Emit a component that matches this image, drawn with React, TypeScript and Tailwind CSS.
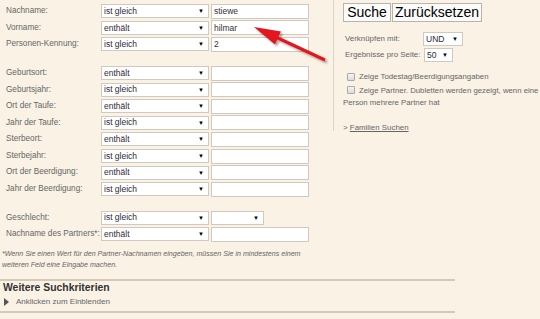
import React from "react";

const font = { fontFamily: '"Liberation Sans", Arial, sans-serif' };

function Select({ value, w }: { value: string; w: string }) {
  return (
    <div
      className={`${w} shrink-0 h-[14px] bg-white border border-[#cfc9bf] flex items-center justify-between pl-[2px] pr-[4px] text-[8.5px] text-[#2e2a3a] whitespace-nowrap`}
    >
      <span>{value}</span>
      <span className="text-[6px] text-black leading-none">▼</span>
    </div>
  );
}

function TextInput({ value }: { value?: string }) {
  return (
    <div className="w-[98px] shrink-0 h-[15px] bg-white border border-[#cfc9bf] flex items-center pl-[2px] text-[8.5px] text-[#333]">
      {value}
    </div>
  );
}

function Row({ label, op, value }: { label: string; op: string; value?: string }) {
  return (
    <div className="h-[16.6px] flex items-center">
      <div className="w-[95px] shrink-0 text-[8.2px] text-[#666] whitespace-nowrap">{label}</div>
      <Select value={op} w="w-[108px]" />
      <div className="w-[2px] shrink-0" />
      <TextInput value={value} />
    </div>
  );
}

function Check() {
  return (
    <span className="inline-block shrink-0 w-[8px] h-[8px] border border-[#aaa] rounded-[1px] bg-gradient-to-b from-[#f4f4f4] to-[#dcdcdc] mr-[4px]" />
  );
}

export default function App() {
  return (
    <div
      className="relative w-[540px] h-[319px] overflow-hidden bg-[#f9f2e5]"
      style={font}
    >
      <div className="flex">
        <div className="w-[333px] shrink-0 pl-[6px] pt-[3px]">
          <Row label="Nachname:" op="ist gleich" value="stiewe" />
          <Row label="Vorname:" op="enthält" value="hilmar" />
          <Row label="Personen-Kennung:" op="ist gleich" value="2" />
          <div className="h-[12px]" />
          <Row label="Geburtsort:" op="enthält" />
          <Row label="Geburtsjahr:" op="ist gleich" />
          <Row label="Ort der Taufe:" op="enthält" />
          <Row label="Jahr der Taufe:" op="ist gleich" />
          <Row label="Sterbeort:" op="enthält" />
          <Row label="Sterbejahr:" op="ist gleich" />
          <Row label="Ort der Beerdigung:" op="enthält" />
          <Row label="Jahr der Beerdigung:" op="ist gleich" />
          <div className="h-[12px]" />
          <div className="h-[16.6px] flex items-center">
            <div className="w-[95px] shrink-0 text-[8.2px] text-[#666] whitespace-nowrap">Geschlecht:</div>
            <Select value="ist gleich" w="w-[108px]" />
            <div className="w-[2px] shrink-0" />
            <Select value="" w="w-[53px]" />
          </div>
          <Row label="Nachname des Partners*:" op="enthält" />
        </div>
        <div className="w-[207px] shrink-0 h-[131px] border-l border-[#ddd4c4] pl-[9px] whitespace-nowrap">
          <div className="flex gap-[1px] mt-[3px]">
            <div className="w-[48px] h-[19px] bg-[#fbfbfb] border border-[#b9b4ab] flex items-center justify-center text-[14px] text-black">
              Suche
            </div>
            <div className="w-[90px] h-[19px] bg-[#fbfbfb] border border-[#b9b4ab] flex items-center justify-center text-[14px] text-black">
              Zurücksetzen
            </div>
          </div>
          <div className="mt-[9px] h-[16px] flex items-center pl-[2px]">
            <div className="w-[78px] shrink-0 text-[7.9px] text-[#666]">Verknüpfen mit:</div>
            <Select value="UND" w="w-[40px]" />
          </div>
          <div className="h-[16px] flex items-center pl-[2px]">
            <div className="w-[79px] shrink-0 text-[7.9px] text-[#666]">Ergebnisse pro Seite:</div>
            <Select value="50" w="w-[29px]" />
          </div>
          <div className="mt-[7px] text-[7.8px] text-[#666] leading-[13.5px]">
            <div className="flex items-center pl-[4px]">
              <Check />
              Zeige Todestag/Beerdigungsangaben
            </div>
            <div className="flex items-center pl-[4px]">
              <Check />
              Zeige Partner. Dubletten werden gezeigt, wenn eine
            </div>
            <div className="leading-[11px]">Person mehrere Partner hat</div>
          </div>
          <div className="mt-[14px] text-[7.9px] text-[#666]">
            &gt; <span className="underline">Familien Suchen</span>
          </div>
        </div>
      </div>
      <div className="pl-[2px] mt-[6px] text-[7.1px] italic text-[#666] leading-[11px] whitespace-nowrap">
        <div>*Wenn Sie einen Wert für den Partner-Nachnamen eingeben, müssen Sie in mindestens einem</div>
        <div>weiteren Feld eine Eingabe machen.</div>
      </div>
      <div className="mt-[8px] w-[455px] h-[2px] bg-[#d3cab9]" />
      <div className="pl-[3px] text-[10.4px] font-bold text-[#333] leading-[14px]">
        Weitere Suchkriterien
      </div>
      <div className="h-[14px] flex items-center pl-[4px] text-[8px] text-[#666]">
        <svg width="5" height="8" viewBox="0 0 5 8" className="mr-[7px]">
          <polygon points="0,0 5,4 0,8" fill="#555" />
        </svg>
        Anklicken zum Einblenden
      </div>
      <div className="mt-[2px] w-[455px] h-[2px] bg-[#d3cab9]" />

      <svg
        className="absolute left-0 top-0 pointer-events-none"
        width="540"
        height="319"
        viewBox="0 0 540 319"
      >
        <defs>
          <filter id="sh" x="-20%" y="-20%" width="140%" height="140%">
            <feDropShadow dx="2" dy="2" stdDeviation="1.2" floodColor="#000" floodOpacity="0.35" />
          </filter>
        </defs>
        <polygon
          filter="url(#sh)"
          fill="#e2161b"
          points="254,27 281,31.4 278.4,36.6 325.6,58.6 324.4,61.4 277.2,39.4 275,44.4"
        />
      </svg>
    </div>
  );
}
